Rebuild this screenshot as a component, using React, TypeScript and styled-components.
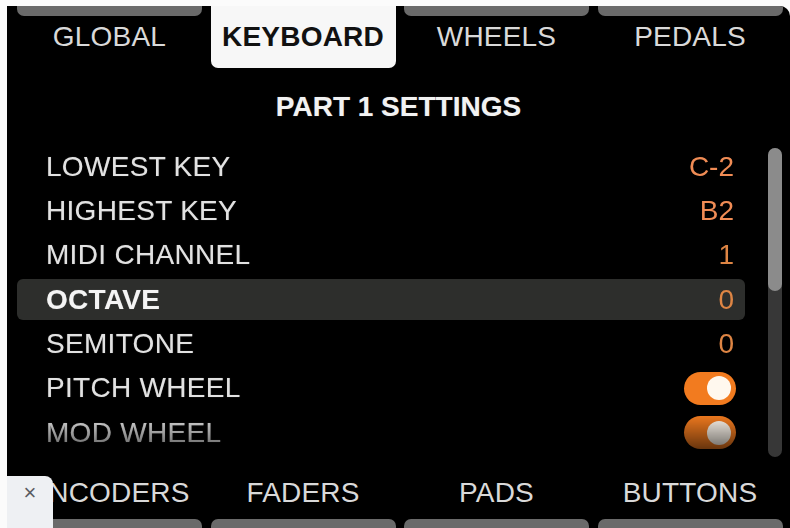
import { createGlobalStyle, styled } from 'styled-components';

const GlobalStyle = createGlobalStyle`
	html, body {
		margin: 0;
		background: #fbfbfb;
		font-family: 'Liberation Sans', Arial, sans-serif;
	}
`;

const Frame = styled.div`
	width: 790px;
	height: 528px;
	box-sizing: border-box;
	padding: 6px 0 0 7px;
	background: #fbfbfb;
`;

const Screen = styled.div`
	position: relative;
	height: 100%;
	display: flex;
	flex-direction: column;
	background: #000;
	overflow: hidden;
	border-top-right-radius: 10px;
	text-shadow: 0 0 1px rgba(255, 255, 255, 0.35);
`;

const TabRow = styled.div`
	display: grid;
	grid-template-columns: repeat(4, 185px);
	column-gap: 8.5px;
	padding: 0 8px 0 10px;
	height: 62px;
`;

const Tab = styled.div<{ $active?: boolean; $bottom?: boolean }>`
	position: relative;
	display: flex;
	align-items: center;
	justify-content: center;
	font-size: 28px;
	letter-spacing: 0.2px;
	font-weight: ${({ $active }) => ($active ? 700 : 400)};
	color: ${({ $active }) => ($active ? '#111' : '#d9d9d9')};
	background: ${({ $active }) => ($active ? '#f7f7f7' : 'transparent')};
	border-radius: 0 0 7px 7px;
	text-shadow: none;

	&::before {
		content: '';
		position: absolute;
		left: 0;
		right: 0;
		top: 0;
		height: 10px;
		background: ${({ $active }) => ($active ? 'transparent' : '#6a6a6a')};
		border-radius: 0 0 7px 7px;
	}
`;

const Title = styled.div`
	height: 78px;
	display: flex;
	align-items: center;
	justify-content: center;
	font-size: 28px;
	font-weight: 700;
	color: #f2f2f2;
`;

const Body = styled.div`
	display: flex;
	align-items: flex-start;
	padding: 0 8px 0 10px;
	gap: 23px;
	height: 311px;
`;

const List = styled.div`
	flex: 1;
	display: flex;
	flex-direction: column;
	-webkit-mask-image: linear-gradient(to bottom, #000 0, #000 268px, rgba(0, 0, 0, 0.3) 311px);
	mask-image: linear-gradient(to bottom, #000 0, #000 268px, rgba(0, 0, 0, 0.3) 311px);
`;

const Row = styled.div<{ $selected?: boolean }>`
	height: 41px;
	margin-bottom: 3.4px;
	display: flex;
	align-items: center;
	justify-content: space-between;
	padding: 0 11px 0 29px;
	border-radius: 6px;
	background: ${({ $selected }) => ($selected ? '#2d2e2c' : 'transparent')};
`;

const Label = styled.span<{ $selected?: boolean }>`
	font-size: 28px;
	letter-spacing: 0.3px;
	font-weight: ${({ $selected }) => ($selected ? 700 : 400)};
	color: ${({ $selected }) => ($selected ? '#f4f4f4' : '#e2e2e2')};
`;

const Value = styled.span<{ $dim?: boolean }>`
	font-size: 28px;
	color: ${({ $dim }) => ($dim ? '#de8544' : '#f08c55')};
	text-shadow: none;
`;

const Toggle = styled.div`
	position: relative;
	width: 52px;
	height: 33px;
	border-radius: 17px;
	background: #f27b1f;
	margin-right: -2px;

	&::after {
		content: '';
		position: absolute;
		right: 5px;
		top: 4.5px;
		width: 24px;
		height: 24px;
		border-radius: 50%;
		background: #fff8ee;
	}
`;

const Track = styled.div`
	width: 14px;
	height: 309px;
	margin-top: 1.5px;
	border-radius: 7px;
	background: #373737;
	display: flex;
	flex-direction: column;
`;

const Thumb = styled.div`
	height: 143px;
	border-radius: 7px;
	background: #8b8b8b;
`;

const BottomRow = styled(TabRow)`
	flex: 1;
	height: auto;
`;

const BottomTab = styled.div`
	display: flex;
	flex-direction: column;
	font-size: 28px;
	letter-spacing: 0.2px;
	color: #d9d9d9;
	text-shadow: none;
`;

const BottomLabel = styled.div`
	flex: 1;
	padding-top: 10px;
	display: flex;
	align-items: center;
	justify-content: center;
`;

const BottomBar = styled.div`
	height: 9px;
	background: #6a6a6a;
	border-radius: 7px 7px 0 0;
`;

const CloseBox = styled.div`
	position: absolute;
	left: 0;
	bottom: 0;
	width: 46px;
	height: 52px;
	background: #eef0f3;
	border-top-right-radius: 8px;
	display: flex;
	align-items: flex-start;
	justify-content: center;
	padding-top: 4px;
	box-sizing: border-box;
	color: #5a5d62;
	font-size: 22px;
	text-shadow: none;
`;

type Setting = { label: string; value?: string; toggle?: boolean; dim?: boolean };

const settings: Setting[] = [
	{ label: 'LOWEST KEY', value: 'C-2' },
	{ label: 'HIGHEST KEY', value: 'B2' },
	{ label: 'MIDI CHANNEL', value: '1', dim: true },
	{ label: 'OCTAVE', value: '0', dim: true },
	{ label: 'SEMITONE', value: '0', dim: true },
	{ label: 'PITCH WHEEL', toggle: true },
	{ label: 'MOD WHEEL', toggle: true },
];

const topTabs = ['GLOBAL', 'KEYBOARD', 'WHEELS', 'PEDALS'];
const bottomTabs = ['ENCODERS', 'FADERS', 'PADS', 'BUTTONS'];

export default function App() {
	return (
		<Frame>
			<GlobalStyle />
			<Screen>
				<TabRow>
					{topTabs.map((t) => (
						<Tab key={t} $active={t === 'KEYBOARD'}>
							{t}
						</Tab>
					))}
				</TabRow>
				<Title>PART 1 SETTINGS</Title>
				<Body>
					<List>
						{settings.map((s) => {
							const selected = s.label === 'OCTAVE';
							return (
								<Row key={s.label} $selected={selected}>
									<Label $selected={selected}>{s.label}</Label>
									{s.toggle ? <Toggle /> : <Value $dim={s.dim}>{s.value}</Value>}
								</Row>
							);
						})}
					</List>
					<Track>
						<Thumb />
					</Track>
				</Body>
				<BottomRow>
					{bottomTabs.map((t) => (
						<BottomTab key={t}>
							<BottomLabel>{t}</BottomLabel>
							<BottomBar />
						</BottomTab>
					))}
				</BottomRow>
				<CloseBox>×</CloseBox>
			</Screen>
		</Frame>
	);
}
